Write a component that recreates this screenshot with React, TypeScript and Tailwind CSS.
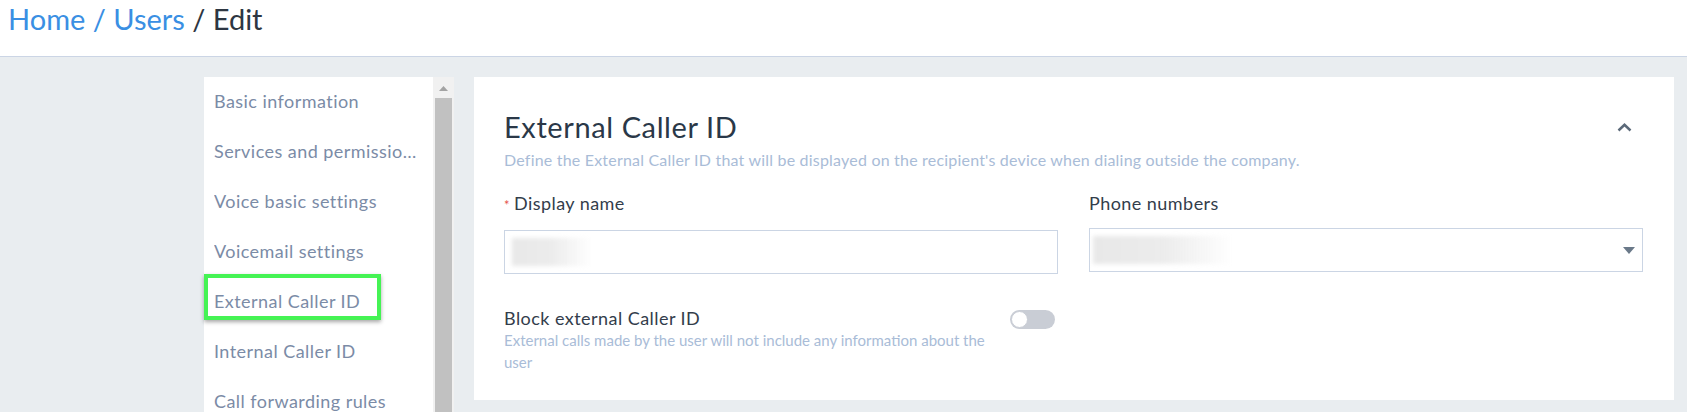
const navItems = [
  "Basic information",
  "Services and permissions",
  "Voice basic settings",
  "Voicemail settings",
  "External Caller ID",
  "Internal Caller ID",
  "Call forwarding rules",
];

function Blurred({ w }: { w: number }) {
  return (
    <div
      className="h-[28px] bg-linear-to-r from-[#e8e8e8] via-[#ececec] to-white/0 blur-[2px]"
      style={{ width: w }}
    />
  );
}

export default function App() {
  return (
    <div className="h-[412px] overflow-hidden bg-[#e9edf0] font-['Lato',sans-serif]">
      <header className="h-[57px] border-b border-[#cbd5e5] bg-white pl-[8px]">
        <h1 className="pt-[1px] text-[29px] leading-[36px] text-[#2d3642]">
          <span className="text-[#3a8fe3]">Home / Users</span> / Edit
        </h1>
      </header>

      <div className="flex gap-[20px] pl-[204px] pr-[13px] pt-[20px]">
        <aside className="flex h-[400px] w-[250px] shrink-0 bg-white">
          <nav className="-mt-px min-w-0 flex-1">
            {navItems.map((item) => (
              <div
                key={item}
                className="relative flex h-[50px] items-center pl-[10px] pr-[14px] text-[18px] tracking-[0.45px] text-[#7b8ba6]"
              >
                <span className="truncate">{item}</span>
                {item === "External Caller ID" && (
                  <span className="absolute left-0 top-[-2px] h-[46px] w-[177px] border-4 border-[#45f354] shadow-[0_2px_4px_rgba(0,0,0,0.35)]" />
                )}
              </div>
            ))}
          </nav>
          <div className="flex w-[21px] flex-col items-center bg-[#f1f1f1]">
            <svg width="9" height="5" viewBox="0 0 9 5" className="mt-[9px]">
              <polygon points="0,5 4.5,0 9,5" fill="#a3a3a3" />
            </svg>
            <div className="mt-[7px] w-[17px] flex-1 bg-[#c1c1c1]" />
          </div>
        </aside>

        <section className="h-[323px] flex-1 bg-white pl-[30px] pr-[31px] pt-[32px]">
          <div className="flex items-center justify-between">
            <h2 className="text-[29px] leading-[36px] tracking-[0.6px] text-[#2a3848]">External Caller ID</h2>
            <svg width="15" height="9" viewBox="0 0 15 9" className="mr-[11px]">
              <polyline points="1.5,7.5 7.5,1.8 13.5,7.5" fill="none" stroke="#5b6979" strokeWidth="2.5" />
            </svg>
          </div>
          <p className="mt-[5px] text-[16px] leading-[20px] tracking-[0.2px] text-[#a9bcd7]">
            Define the External Caller ID that will be displayed on the recipient's device when dialing outside the company.
          </p>

          <div className="mt-[21px] grid grid-cols-2 gap-x-[31px]">
            <div>
              <label className="block text-[18px] leading-[24px] tracking-[0.45px] text-[#333d4b]">
                <span className="mr-[4px] text-[13px] text-[#e5534b]">*</span>Display name
              </label>
              <div className="mt-[13px] flex h-[44px] items-center border border-[#cbd5e4] pl-[7px]">
                <Blurred w={80} />
              </div>
            </div>
            <div>
              <label className="block text-[18px] leading-[24px] tracking-[0.45px] text-[#333d4b]">Phone numbers</label>
              <div className="mt-[13px] flex h-[44px] items-center justify-between border border-[#cbd5e4] pl-[3px] pr-[7px]">
                <Blurred w={140} />
                <svg width="12" height="7" viewBox="0 0 12 7">
                  <polygon points="0,0 12,0 6,7" fill="#6a7989" />
                </svg>
              </div>
            </div>
          </div>

          <div className="mt-[33px] flex w-[551px] items-start justify-between">
            <div className="w-[490px]">
              <div className="text-[18px] leading-[22px] tracking-[0.45px] text-[#333d4b]">Block external Caller ID</div>
              <div className="text-[15px] leading-[22px] text-[#a9bcd7]">
                External calls made by the user will not include any information about the user
              </div>
            </div>
            <div className="mt-[3px] flex h-[19px] w-[45px] items-center rounded-full bg-[#c9cdd5] px-[1px]">
              <div className="h-[17px] w-[17px] rounded-full border border-[#c9cdd5] bg-white" />
            </div>
          </div>
        </section>
      </div>
    </div>
  );
}
